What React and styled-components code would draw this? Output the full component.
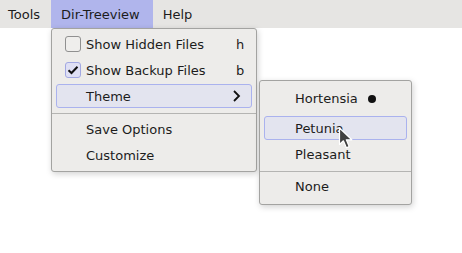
import React from 'react'
import styled, { createGlobalStyle } from 'styled-components'

const GlobalStyle = createGlobalStyle`
  html, body {
    margin: 0;
    padding: 0;
    background: #ffffff;
  }
  body {
    font-family: 'DejaVu Sans', 'Liberation Sans', sans-serif;
    font-size: 13px;
    color: #1c1c1c;
  }
`

const Screen = styled.div`
  position: relative;
  width: 462px;
  height: 253px;
  overflow: hidden;
  background: #ffffff;
`

const MenuBar = styled.div`
  display: flex;
  height: 28px;
  background: #e6e5e3;
`

const BarItem = styled.div`
  display: flex;
  align-items: center;
  padding: 0 ${p => (p.$active ? 13 : 10)}px 0 10px;
  background: ${p => (p.$active ? '#b0b5ec' : 'transparent')};
  &:first-child {
    padding-left: 8px;
    padding-right: 11px;
  }
`

const Menu = styled.div`
  position: absolute;
  left: ${p => p.$x}px;
  top: ${p => p.$y}px;
  width: ${p => p.$w}px;
  box-sizing: border-box;
  display: flex;
  flex-direction: column;
  background: #edecea;
  border: 1px solid #a3a3a1;
  border-radius: 3px;
  padding: ${p => p.$pad};
  box-shadow: 1px 2px 6px rgba(0, 0, 0, 0.18);
`

const Item = styled.div`
  display: flex;
  align-items: center;
  height: 24px;
  flex: none;
  margin: ${p => p.$top || 1}px 4px 1px;
  padding: 0 ${p => p.$right || 10}px 0 ${p => p.$left || 29}px;
  box-sizing: border-box;
  border: 1px solid ${p => (p.$hover ? '#aab2ee' : 'transparent')};
  border-radius: 3px;
  background: ${p => (p.$hover ? '#e3e4ef' : 'transparent')};
  position: relative;
`

const Label = styled.span`
  flex: 1;
`

const Shortcut = styled.span`
  width: 8px;
`

const Check = styled.span`
  position: absolute;
  left: 8px;
  top: 3px;
  width: 16px;
  height: 16px;
  box-sizing: border-box;
  border: 1px solid ${p => (p.$on ? '#a2a8e2' : '#909090')};
  border-radius: 3px;
  background: ${p => (p.$on ? '#dfe0f4' : '#efeeec')};
  display: flex;
  align-items: center;
  justify-content: center;
`

const Separator = styled.div`
  height: 1px;
  flex: none;
  background: #b4b4b2;
  margin: ${p => p.$m};
`

const Dot = styled.span`
  width: 8px;
  height: 8px;
  border-radius: 50%;
  background: #111;
  margin-left: 10px;
  margin-top: 1px;
`

const Cursor = styled.svg`
  position: absolute;
  left: 338px;
  top: 127px;
`

export default function App() {
  return (
    <Screen>
      <GlobalStyle />
      <MenuBar>
        <BarItem>Tools</BarItem>
        <BarItem $active>Dir-Treeview</BarItem>
        <BarItem>Help</BarItem>
      </MenuBar>

      <Menu $x={51} $y={28} $w={206} $pad="2px 0 3px">
        <Item $right={7}>
          <Check />
          <Label>Show Hidden Files</Label>
          <Shortcut>h</Shortcut>
        </Item>
        <Item $right={7}>
          <Check $on>
            <svg width="12" height="10" viewBox="0 0 12 10">
              <path d="M1.5 5.2 L4.5 8 L10.5 1.8" fill="none" stroke="#111" strokeWidth="2" />
            </svg>
          </Check>
          <Label>Show Backup Files</Label>
          <Shortcut>b</Shortcut>
        </Item>
        <Item $hover $right={10}>
          <Label>Theme</Label>
          <svg width="9" height="12" viewBox="0 0 9 12">
            <path d="M2 1 L7 6 L2 11" fill="none" stroke="#111" strokeWidth="1.8" />
          </svg>
        </Item>
        <Separator $m="4px 0 2px" />
        <Item>
          <Label>Save Options</Label>
        </Item>
        <Item>
          <Label>Customize</Label>
        </Item>
      </Menu>

      <Menu $x={259} $y={80} $w={153} $pad="4px 0 5px">
        <Item $left={30}>
          <span>Hortensia</span>
          <Dot />
        </Item>
        <Item $hover $left={30} $top={5}>
          <Label>Petunia</Label>
        </Item>
        <Item $left={30}>
          <Label>Pleasant</Label>
        </Item>
        <Separator $m="4px 0 1px" />
        <Item $left={30}>
          <Label>None</Label>
        </Item>
      </Menu>

      <Cursor width="16" height="23" viewBox="0 0 16 23">
        <path
          d="M1.5 1 L1.5 17.5 L5.4 13.8 L8.4 20.8 L11.2 19.6 L8.3 12.8 L13.8 12.8 Z"
          fill="#404040"
          stroke="#ffffff"
          strokeWidth="1.2"
          strokeLinejoin="round"
        />
      </Cursor>
    </Screen>
  )
}
